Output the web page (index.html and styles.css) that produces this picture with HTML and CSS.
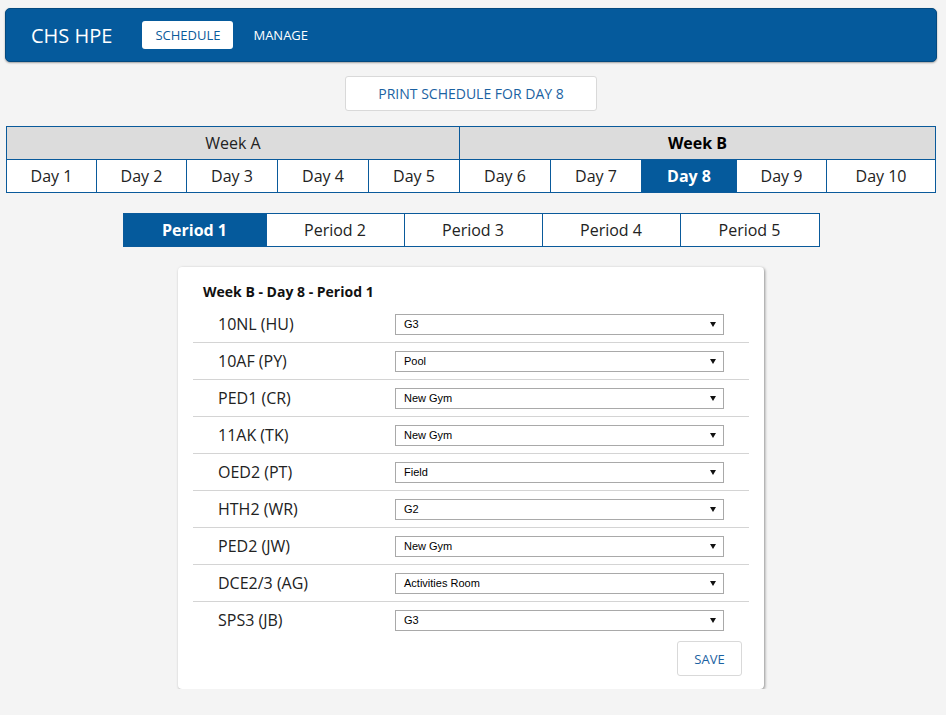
FILE: index.html
```html
<!DOCTYPE html>
<html>
<head>
<meta charset="utf-8">
<link rel="stylesheet" href="styles.css">
</head>
<body>
<nav class="navbar">
  <div class="brand">CHS HPE</div>
  <a class="nav-link active">SCHEDULE</a>
  <a class="nav-link">MANAGE</a>
</nav>

<div class="print-wrap">
  <button class="btn print-btn">PRINT SCHEDULE FOR DAY 8</button>
</div>

<div class="calendar">
  <div class="weeks">
    <div class="week">Week A</div>
    <div class="week current">Week B</div>
  </div>
  <div class="days">
    <div class="day">Day 1</div>
    <div class="day">Day 2</div>
    <div class="day">Day 3</div>
    <div class="day">Day 4</div>
    <div class="day">Day 5</div>
    <div class="day">Day 6</div>
    <div class="day">Day 7</div>
    <div class="day selected">Day 8</div>
    <div class="day">Day 9</div>
    <div class="day">Day 10</div>
  </div>
</div>

<div class="periods">
  <div class="period selected">Period 1</div>
  <div class="period">Period 2</div>
  <div class="period">Period 3</div>
  <div class="period">Period 4</div>
  <div class="period">Period 5</div>
</div>

<div class="card">
  <div class="card-title">Week B - Day 8 - Period 1</div>
  <div class="row"><div class="label">10NL (HU)</div><div class="select"><span>G3</span></div></div>
  <div class="row"><div class="label">10AF (PY)</div><div class="select"><span>Pool</span></div></div>
  <div class="row"><div class="label">PED1 (CR)</div><div class="select"><span>New Gym</span></div></div>
  <div class="row"><div class="label">11AK (TK)</div><div class="select"><span>New Gym</span></div></div>
  <div class="row"><div class="label">OED2 (PT)</div><div class="select"><span>Field</span></div></div>
  <div class="row"><div class="label">HTH2 (WR)</div><div class="select"><span>G2</span></div></div>
  <div class="row"><div class="label">PED2 (JW)</div><div class="select"><span>New Gym</span></div></div>
  <div class="row"><div class="label">DCE2/3 (AG)</div><div class="select"><span>Activities Room</span></div></div>
  <div class="row last"><div class="label">SPS3 (JB)</div><div class="select"><span>G3</span></div></div>
  <div class="actions"><button class="btn save-btn">SAVE</button></div>
</div>
</body>
</html>
```

FILE: styles.css
```css
html, body {
  margin: 0;
  padding: 0;
}
body {
  background: #f4f4f4;
  font-family: "Open Sans", "Liberation Sans", sans-serif;
  color: #333;
}

.navbar {
  margin: 8px 9px 0 5px;
  height: 52px;
  background: #055a9c;
  border: 1px solid #03497f;
  border-radius: 5px;
  box-shadow: 0 1px 2px rgba(0, 0, 0, 0.35);
  display: flex;
  align-items: center;
  padding-left: 25px;
}
.brand {
  color: #fff;
  font-size: 20px;
  margin-right: 30px;
}
.nav-link {
  color: #fff;
  font-size: 13px;
  height: 28px;
  line-height: 28px;
  padding: 0 13px;
  border-radius: 3px;
  margin-right: 7px;
}
.nav-link.active {
  background: #fff;
  color: #0b5b9b;
}

.print-wrap {
  display: flex;
  justify-content: center;
  margin-top: 14px;
  position: relative;
  left: -2px;
}
.btn {
  font-family: "Open Sans", "Liberation Sans", sans-serif;
  background: #fff;
  border: 1px solid #d9d9d9;
  border-radius: 3px;
  color: #1b62a2;
  cursor: pointer;
}
.print-btn {
  width: 252px;
  height: 35px;
  font-size: 14px;
  padding: 0;
}

.calendar {
  margin: 15px 0 0 6px;
  width: 928px;
  border: 1px solid #0a5a9b;
}
.weeks {
  display: grid;
  grid-template-columns: 452px 476px;
  background: #dcdcdc;
  border-bottom: 1px solid #0a5a9b;
}
.week {
  height: 32px;
  line-height: 32px;
  text-align: center;
  font-size: 16px;
  color: #222;
}
.week + .week {
  border-left: 1px solid #0a5a9b;
}
.week.current {
  font-weight: bold;
  color: #000;
}
.days {
  display: grid;
  grid-template-columns: 89px 90px 91px 91px 91px 91px 91px 95px 90px 109px;
  background: #fff;
}
.day {
  height: 32px;
  line-height: 32px;
  text-align: center;
  font-size: 16px;
  color: #222;
}
.day + .day {
  border-left: 1px solid #0a5a9b;
}
.day.selected {
  background: #055a9c;
  color: #fff;
  font-weight: bold;
}

.periods {
  margin: 20px auto 0;
  width: 695px;
  border: 1px solid #0a5a9b;
  display: grid;
  grid-template-columns: 142px 138px 138px 138px 139px;
  background: #fff;
  position: relative;
  left: -2px;
}
.period {
  height: 32px;
  line-height: 32px;
  text-align: center;
  font-size: 16px;
  color: #222;
}
.period + .period {
  border-left: 1px solid #0a5a9b;
}
.period.selected {
  background: #055a9c;
  color: #fff;
  font-weight: bold;
}

.card {
  width: 556px;
  margin: 20px auto 0;
  background: #fff;
  border-radius: 4px;
  box-shadow: 1px 1px 3px rgba(0, 0, 0, 0.4);
  padding: 15px 15px 13px 15px;
  position: relative;
  left: -2px;
}
.card-title {
  font-size: 14px;
  font-weight: bold;
  color: #111;
  line-height: 20px;
  padding-left: 10px;
  margin-bottom: 4px;
}
.row {
  display: flex;
  align-items: center;
  height: 36px;
  border-bottom: 1px solid #d4d4d4;
}
.row.last {
  border-bottom: none;
}
.label {
  width: 177px;
  padding-left: 25px;
  font-size: 16px;
  color: #222;
}
.select {
  position: relative;
  width: 327px;
  height: 19px;
  border: 1px solid #a9a9a9;
  background: #fff;
  font-family: "Liberation Sans", Arial, sans-serif;
  font-size: 11px;
  color: #000;
  line-height: 19px;
}
.select span {
  padding-left: 8px;
}
.select::after {
  content: "";
  position: absolute;
  right: 7px;
  top: 7px;
  width: 0;
  height: 0;
  border-left: 3px solid transparent;
  border-right: 3px solid transparent;
  border-top: 5px solid #111;
}
.actions {
  display: flex;
  justify-content: flex-end;
  padding-right: 7px;
  margin-top: 3px;
}
.save-btn {
  width: 65px;
  height: 35px;
  font-size: 13px;
  padding: 0;
}
```
